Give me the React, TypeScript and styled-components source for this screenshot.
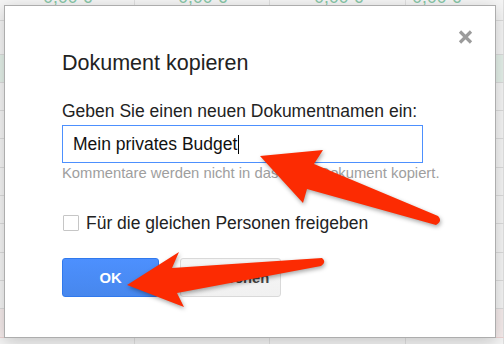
import React from "react";
import styled, { createGlobalStyle } from "styled-components";

const Global = createGlobalStyle`
  html, body { margin: 0; padding: 0; }
  body {
    width: 504px;
    height: 344px;
    overflow: hidden;
    background: #f4f4f4;
    font-family: "Liberation Sans", Arial, sans-serif;
  }
`;

const Stage = styled.div`
  position: relative;
  width: 504px;
  height: 344px;
  overflow: hidden;
`;

const Sheet = styled.div`
  display: flex;
  flex-direction: column;
`;

type Tone = "plain" | "green" | "pink";

const Row = styled.div<{ $h: number; $tone?: Tone }>`
  display: grid;
  grid-template-columns: 135px 135px 136px 1fr;
  height: ${(p) => p.$h}px;
  box-sizing: border-box;
  border-bottom: 1px solid ${(p) => (p.$tone === "pink" ? "#ecd3d3" : "#dcdcdc")};
  background: ${(p) =>
    p.$tone === "green" ? "#e4f0e9" : p.$tone === "pink" ? "#f6ecec" : "#f5f5f5"};
`;

const Cell = styled.div`
  display: flex;
  justify-content: flex-end;
  align-items: flex-start;
  padding-right: 42px;
  border-right: 1px solid #e0e0e0;
  overflow: hidden;
`;

const Amount = styled.span`
  font-size: 17.5px;
  line-height: 1;
  margin-top: -11px;
  color: #86c6a6;
  white-space: nowrap;
`;

const Dialog = styled.div`
  position: absolute;
  left: 4px;
  top: 5px;
  width: 492px;
  height: 333px;
  box-sizing: border-box;
  background: #fff;
  border: 1px solid #adadad;
  box-shadow: 0 4px 16px rgba(0, 0, 0, 0.2);
  padding: 45px 0 0 57px;
  display: flex;
  flex-direction: column;
  align-items: flex-start;
  color: #222;
`;

const Close = styled.button`
  position: absolute;
  top: 24px;
  right: 22px;
  width: 15px;
  height: 14px;
  padding: 0;
  border: 0;
  background: none;
  display: flex;
`;

const Title = styled.h1`
  margin: 0;
  font-size: 21.5px;
  line-height: 25px;
  font-weight: normal;
  color: #222;
`;

const Label = styled.div`
  margin-top: 25px;
  font-size: 17.5px;
  line-height: 20px;
`;

const Field = styled.div`
  margin-top: 4px;
  width: 361px;
  height: 38px;
  box-sizing: border-box;
  border: 1px solid #4d90fe;
  padding: 0 10px;
  display: flex;
  align-items: center;
  font-size: 17.5px;
  line-height: 20px;
  color: #111;
`;

const Caret = styled.span`
  display: inline-block;
  width: 1px;
  height: 19px;
  margin-left: 1px;
  background: #000;
`;

const Hint = styled.div`
  margin-top: 2px;
  font-size: 14.8px;
  line-height: 17px;
  color: #9e9e9e;
`;

const CheckRow = styled.label`
  margin-top: 31px;
  display: flex;
  align-items: center;
  gap: 7px;
  height: 20px;
  font-size: 17.5px;
  line-height: 20px;
`;

const Box = styled.span`
  width: 16px;
  height: 16px;
  margin-left: 1px;
  box-sizing: border-box;
  border: 1px solid #c6c6c6;
  border-radius: 1px;
  background: #fff;
`;

const Buttons = styled.div`
  margin-top: 25px;
  display: flex;
  gap: 21px;
`;

const Button = styled.button<{ $primary?: boolean }>`
  height: 39px;
  min-width: 97px;
  box-sizing: border-box;
  padding: 0 11px;
  border-radius: 3px;
  font-family: "Liberation Sans", Arial, sans-serif;
  font-weight: bold;
  font-size: 14.8px;
  border: 1px solid ${(p) => (p.$primary ? "#3079ed" : "#d9d9d9")};
  background: ${(p) =>
    p.$primary
      ? "linear-gradient(#4d90fe, #4787ed)"
      : "linear-gradient(#f5f5f5, #f1f1f1)"};
  color: ${(p) => (p.$primary ? "#fff" : "#444")};
`;

const Annotations = styled.svg`
  position: absolute;
  left: 0;
  top: 0;
  width: 504px;
  height: 344px;
  pointer-events: none;
  filter: drop-shadow(1px 2px 2px rgba(0, 0, 0, 0.35));
`;

const rows: { h: number; tone?: Tone; amounts?: boolean }[] = [
  { h: 21, amounts: true },
  { h: 34 },
  { h: 28, tone: "green" },
  { h: 28 },
  { h: 28 },
  { h: 29 },
  { h: 28 },
  { h: 28 },
  { h: 29 },
  { h: 28 },
  { h: 28 },
  { h: 29, tone: "pink" },
  { h: 20 },
];

export default function App() {
  return (
    <Stage>
      <Global />
      <Sheet>
        {rows.map((r, i) => (
          <Row key={i} $h={r.h} $tone={r.tone}>
            {[0, 1, 2, 3].map((c) => (
              <Cell key={c}>{r.amounts && <Amount>0,00 €</Amount>}</Cell>
            ))}
          </Row>
        ))}
      </Sheet>

      <Dialog>
        <Close aria-label="Schließen">
          <svg width="15" height="14" viewBox="0 0 15 14">
            <path d="M2 1.5 L13 12.5 M13 1.5 L2 12.5" stroke="#9b9b9b" strokeWidth="3.2" />
          </svg>
        </Close>
        <Title>Dokument kopieren</Title>
        <Label>Geben Sie einen neuen Dokumentnamen ein:</Label>
        <Field>
          Mein privates Budget
          <Caret />
        </Field>
        <Hint>Kommentare werden nicht in das neue Dokument kopiert.</Hint>
        <CheckRow>
          <Box />
          Für die gleichen Personen freigeben
        </CheckRow>
        <Buttons>
          <Button $primary>OK</Button>
          <Button>Abbrechen</Button>
        </Buttons>
      </Dialog>

      <Annotations viewBox="0 0 504 344">
        <path
          d="M260 156 L323 150 L314 164 L438 216 Q443 221 436 225 L307 189 L303 203 Z"
          fill="#fc2b02"
        />
        <path
          d="M127 285 L179 252 L172 268 L322 258 Q327 262 321 266 L177 293 L184 307 Z"
          fill="#fc2b02"
        />
      </Annotations>
    </Stage>
  );
}
